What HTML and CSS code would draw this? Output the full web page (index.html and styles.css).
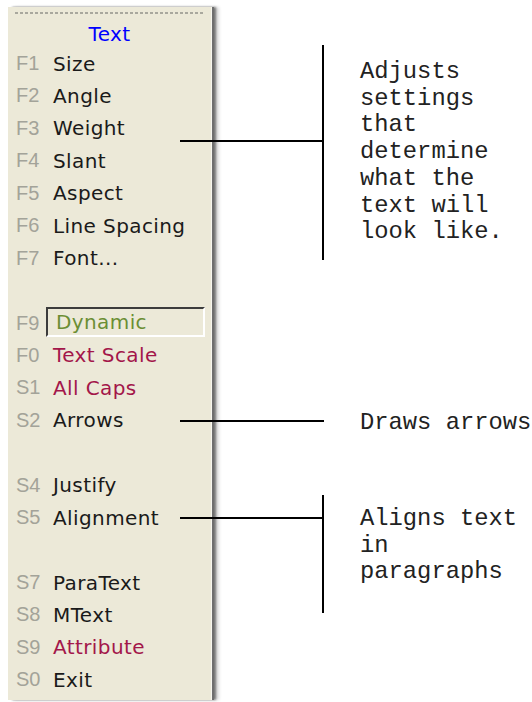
FILE: index.html
```html
<!DOCTYPE html>
<html lang="en">
<head>
    <meta charset="UTF-8">
    <meta name="viewport" content="width=device-width, initial-scale=1.0">
    <title>Text Menu</title>
    <link rel="stylesheet" href="styles.css">
</head>
<body>
    <div class="page">
        <div class="menu-panel">
            <div class="grip"></div>
            <div class="menu-title">Text</div>
            <div class="item"><span class="key">F1</span><span class="label">Size</span></div>
            <div class="item"><span class="key">F2</span><span class="label">Angle</span></div>
            <div class="item"><span class="key">F3</span><span class="label">Weight</span></div>
            <div class="item"><span class="key">F4</span><span class="label">Slant</span></div>
            <div class="item"><span class="key">F5</span><span class="label">Aspect</span></div>
            <div class="item"><span class="key">F6</span><span class="label">Line Spacing</span></div>
            <div class="item"><span class="key">F7</span><span class="label">Font...</span></div>
            <div class="item blank"></div>
            <div class="item"><span class="key">F9</span><span class="label toggle">Dynamic</span></div>
            <div class="item"><span class="key">F0</span><span class="label red">Text Scale</span></div>
            <div class="item"><span class="key">S1</span><span class="label red">All Caps</span></div>
            <div class="item"><span class="key">S2</span><span class="label">Arrows</span></div>
            <div class="item blank"></div>
            <div class="item"><span class="key">S4</span><span class="label">Justify</span></div>
            <div class="item"><span class="key">S5</span><span class="label">Alignment</span></div>
            <div class="item blank"></div>
            <div class="item"><span class="key">S7</span><span class="label">ParaText</span></div>
            <div class="item"><span class="key">S8</span><span class="label">MText</span></div>
            <div class="item"><span class="key">S9</span><span class="label red">Attribute</span></div>
            <div class="item"><span class="key">S0</span><span class="label">Exit</span></div>
        </div>

        <!-- callouts sit on top of the panel like a diagram -->
        <div class="callout callout-settings">
            <div class="stem"></div>
            <div class="bar"></div>
            <p class="note">Adjusts<br>settings<br>that<br>determine<br>what the<br>text will<br>look like.</p>
        </div>
        <div class="callout callout-arrows">
            <div class="stem"></div>
            <p class="note">Draws arrows</p>
        </div>
        <div class="callout callout-align">
            <div class="stem"></div>
            <div class="bar"></div>
            <p class="note">Aligns text<br>in<br>paragraphs</p>
        </div>
    </div>
</body>
</html>
```

FILE: styles.css
```css
body {
    margin: 0;
    background: #ffffff;
    font-family: "DejaVu Sans", Verdana, sans-serif;
}
.page {
    position: relative;
    width: 532px;
    height: 702px;
    overflow: hidden;
}
.menu-panel {
    box-sizing: border-box;
    width: 204px;
    height: 693px;
    margin: 7px 0 0 8px;
    padding: 5px 0 0 0;
    background: #ece9d8;
    border-right: 1px solid #f6f5ee;
    box-shadow: 2px 0 0 #6e6e6e, 4px 0 2px rgba(0,0,0,0.45), 7px 0 3px rgba(0,0,0,0.15);
}
.grip {
    height: 2px;
    margin: 0 6px 0 7px;
    background: repeating-linear-gradient(to right, #a9a89e 0 3px, transparent 3px 5px);
}
.menu-title {
    padding-top: 6px;
    height: 27.3px;
    line-height: 29.3px;
    text-align: center;
    font-size: 20px;
    letter-spacing: 0.4px;
    color: #0000ff;
    box-sizing: content-box;
}
.item {
    display: flex;
    align-items: center;
    height: 32.45px;
    font-size: 20px;
    letter-spacing: 0.4px;
}
.key {
    width: 37px;
    padding-left: 8px;
    color: #a3a399;
    font-family: "Liberation Sans", Arial, sans-serif;
    letter-spacing: 0;
}
.label {
    color: #1a1a1a;
}
.label.red {
    color: #a3164a;
}
.label.toggle {
    box-sizing: border-box;
    width: 159px;
    height: 30px;
    line-height: 26px;
    margin-left: -7px;
    margin-top: -2px;
    padding-left: 8px;
    color: #6b8e34;
    border-top: 2px solid #3c3c3c;
    border-left: 2px solid #3c3c3c;
    border-bottom: 2px solid #ffffff;
    border-right: 2px solid #ffffff;
}
.callout {
    position: absolute;
    top: 0;
    left: 0;
}
.stem {
    position: absolute;
    height: 2px;
    background: #000000;
}
.bar {
    position: absolute;
    width: 2px;
    background: #000000;
}
.note {
    position: absolute;
    margin: 0;
    white-space: nowrap;
    font-family: "Liberation Mono", "Courier New", monospace;
    font-size: 23.8px;
    line-height: 26.7px;
    color: #222222;
}
.callout-settings .stem { left: 180px; top: 140px; width: 144px; }
.callout-settings .bar { left: 322px; top: 45px; height: 215px; }
.callout-settings .note { left: 360px; top: 59px; }
.callout-arrows .stem { left: 180px; top: 420px; width: 144px; }
.callout-arrows .note { left: 360px; top: 410px; }
.callout-align .stem { left: 180px; top: 517px; width: 144px; }
.callout-align .bar { left: 322px; top: 495px; height: 118px; }
.callout-align .note { left: 360px; top: 506px; }
```
